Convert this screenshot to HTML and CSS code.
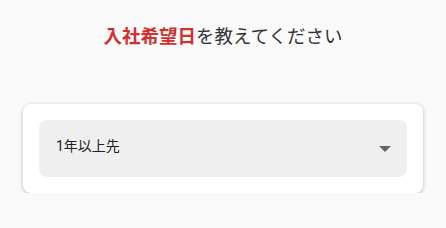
FILE: index.html
```html
<!DOCTYPE html>
<html lang="ja">
<head>
    <meta charset="UTF-8">
    <meta name="viewport" content="width=device-width, initial-scale=1.0">
    <title>入社希望日</title>
    <link rel="stylesheet" href="styles.css">
</head>
<body>
    <div class="question">
        <h2 class="question-title"><span class="accent">入社希望日</span>を教えてください</h2>
        <div class="card">
            <div class="select">
                <span class="select-value">1年以上先</span>
                <span class="select-arrow"></span>
            </div>
        </div>
    </div>
</body>
</html>
```

FILE: styles.css
```css
body {
    margin: 0;
    background-color: #fafafa;
    font-family: "Roboto", "Noto Sans CJK JP", sans-serif;
    color: #333333;
}

.question {
    padding: 23px 23px 0;
}

.question-title {
    margin: 0 0 53px;
    font-size: 18.5px;
    font-weight: 400;
    line-height: 28px;
    text-align: center;
}

.accent {
    color: #d32f2f;
    font-weight: 700;
}

.card {
    background-color: #ffffff;
    border-radius: 8px;
    padding: 16px;
    box-shadow: 0 1px 4px rgba(0, 0, 0, 0.25);
}

.select {
    display: flex;
    align-items: center;
    justify-content: space-between;
    height: 57px;
    padding: 0 16px 0 17px;
    background-color: #efefef;
    border-radius: 8px;
}

.select-value {
    font-size: 14px;
    line-height: 20px;
    margin-bottom: 5px;
    color: #222222;
}

.select-arrow {
    width: 0;
    height: 0;
    border-left: 6px solid transparent;
    border-right: 6px solid transparent;
    border-top: 6px solid #666666;
}
```
